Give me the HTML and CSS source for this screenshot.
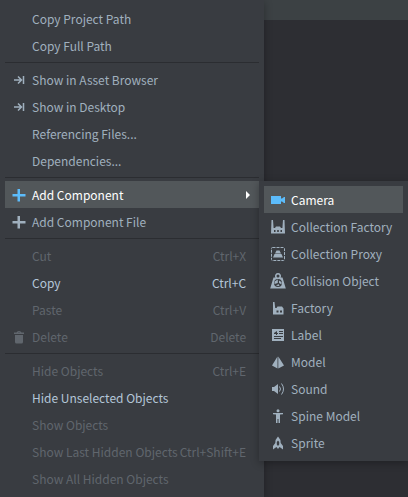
FILE: index.html
```html
<!DOCTYPE html>
<html lang="en">
<head>
<meta charset="utf-8">
<title>Context menu</title>
<link rel="stylesheet" href="styles.css">
</head>
<body>
<div class="toolbar"></div>
<ul class="menu" role="menu">
  <li><button class="item"><span class="label">Copy Project Path</span></button></li>
  <li><button class="item"><span class="label">Copy Full Path</span></button></li>
  <li class="separator" role="separator"></li>
  <li><button class="item"><svg class="icon" viewBox="0 0 16 16"><path class="line" d="M3 8h7M7 4.500l3.500 3.500L7 11.500M12.500 4v8"/></svg><span class="label">Show in Asset Browser</span></button></li>
  <li><button class="item"><svg class="icon" viewBox="0 0 16 16"><path class="line" d="M3 8h7M7 4.500l3.500 3.500L7 11.500M12.500 4v8"/></svg><span class="label">Show in Desktop</span></button></li>
  <li><button class="item"><span class="label">Referencing Files...</span></button></li>
  <li><button class="item"><span class="label">Dependencies...</span></button></li>
  <li class="separator" role="separator"></li>
  <li class="parent">
    <button class="item selected"><svg class="icon" viewBox="0 0 16 16"><path d="M6.500 2h2.500v5h5.500v2.500H9v5H6.500v-5H1.500V7h5z"/></svg><span class="label">Add Component</span><svg class="arrow" viewBox="0 0 4 8"><path d="M0 0l4 4-4 4z"/></svg></button>
    <ul class="menu submenu" role="menu">
      <li><button class="item selected"><svg class="icon" viewBox="0 0 16 16"><path d="M1 4h10v2.500h1L14 5h1v6h-1l-2-1.500h-1V12H1z"/></svg><span class="label">Camera</span></button></li>
      <li><button class="item"><svg class="icon" viewBox="0 0 16 16"><path fill-rule="evenodd" d="M1.500 1H3l.6 8H5l1-1.500h4L11 9h1.400l.6-8h1.500l.5 13.500H1zM4 11v2h1.500v-2zm3.200 0v2h1.600v-2zm3.300 0v2H12v-2z"/></svg><span class="label">Collection Factory</span></button></li>
      <li><button class="item"><svg class="icon" viewBox="0 0 16 16"><rect class="dash" x="1.500" y="1.500" width="13" height="13" rx="1"/><path d="M6.500 4.500h3l1.500 3H5zM4.500 8h7l1.500 3.500H3z"/></svg><span class="label">Collection Proxy</span></button></li>
      <li><button class="item"><svg class="icon" viewBox="0 0 16 16"><path fill-rule="evenodd" d="M8 0a3 3 0 0 1 2.600 4.500H12.500L15.800 15.500H.2L3.500 4.500h1.900A3 3 0 0 1 8 0zM8 1.500a1.500 1.500 0 1 0 0 3 1.500 1.500 0 0 0 0-3zM8 6a4 4 0 1 0 0 8 4 4 0 0 0 0-8z"/><path d="M7.800 6.500v3.500l-3.300 1V8.500zM9 7.500l2.500 1.500v2.500L9 10zM6 12.800L8.500 11l1 2z"/></svg><span class="label">Collision Object</span></button></li>
      <li><button class="item"><svg class="icon" viewBox="0 0 16 16"><path fill-rule="evenodd" d="M3 2h1.500l.7 6h1.300l1-1.500h4.500l1.500 2v6H3zM6.500 10.500v2h2v-2zm3.500 0v2h2v-2z"/></svg><span class="label">Factory</span></button></li>
      <li><button class="item"><svg class="icon" viewBox="0 0 16 16"><path fill-rule="evenodd" d="M2 2h12v12H2zM9 4v1h4V4zM9 6v1h4V6zM4 9v1h9V9zM4 11v1h7v-1zM7 4L4 6v1h2v1h1V7h1V6H7z"/></svg><span class="label">Label</span></button></li>
      <li><button class="item"><svg class="icon" viewBox="0 0 16 16"><path d="M7.500 2.500v12L2 11.500zM8.300 2.500v12L14 11.500z"/></svg><span class="label">Model</span></button></li>
      <li><button class="item"><svg class="icon" viewBox="0 0 16 16"><path d="M2 6h2l4-3v10l-4-3H2z"/><path class="thin" d="M9.500 5.500q2 2.500 0 5M11.500 2.500q4 5.500 0 11"/></svg><span class="label">Sound</span></button></li>
      <li><button class="item"><svg class="icon" viewBox="0 0 16 16"><circle cx="8" cy="2.700" r="1.500"/><path d="M3 5h10v1.200l-3 .3V15H8.500v-4h-1v4H6V6.500l-3-.3z"/></svg><span class="label">Spine Model</span></button></li>
      <li><button class="item"><svg class="icon" viewBox="0 0 16 16"><path fill-rule="evenodd" d="M8 1.500q3 3 2.700 6.500l2.300 3v3.500l-2-1.500-1.500-1L8 14l-1.500-2-1.500 1-2 1.500V11L5.300 8Q5 4.500 8 1.500zM8 5.500L6.800 7v2.500L8 11l1.200-1.500V7z"/></svg><span class="label">Sprite</span></button></li>
    </ul>
  </li>
  <li><button class="item"><svg class="icon" viewBox="0 0 16 16"><path d="M6.500 2h2.500v5h5.500v2.500H9v5H6.500v-5H1.500V7h5z"/></svg><span class="label">Add Component File</span></button></li>
  <li class="separator" role="separator"></li>
  <li><button class="item" disabled><span class="label">Cut</span><kbd>Ctrl+X</kbd></button></li>
  <li><button class="item command"><span class="label">Copy</span><kbd>Ctrl+C</kbd></button></li>
  <li><button class="item" disabled><span class="label">Paste</span><kbd>Ctrl+V</kbd></button></li>
  <li><button class="item" disabled><svg class="icon" viewBox="0 0 16 16"><path fill-rule="evenodd" d="M3 3.500h2.500Q6 2 8 2t2.500 1.500H13V5H3zM6.800 3.500h2.400Q8.700 3 8 3t-1.200.5zM4 6h8v7q0 1.500-1.500 1.500h-5Q4 14.500 4 13z"/></svg><span class="label">Delete</span><kbd>Delete</kbd></button></li>
  <li class="separator" role="separator"></li>
  <li><button class="item" disabled><span class="label">Hide Objects</span><kbd>Ctrl+E</kbd></button></li>
  <li><button class="item command"><span class="label">Hide Unselected Objects</span></button></li>
  <li><button class="item" disabled><span class="label">Show Objects</span></button></li>
  <li><button class="item" disabled><span class="label">Show Last Hidden Objects</span><kbd>Ctrl+Shift+E</kbd></button></li>
  <li><button class="item" disabled><span class="label">Show All Hidden Objects</span></button></li>
</ul>
</body>
</html>
```
FILE: styles.css
```css
* {
  box-sizing: border-box;
}

body {
  margin: 0;
  background: #2d2e33;
  font-family: "Noto Sans CJK SC", "Noto Sans", sans-serif;
  font-size: 12px;
}

.toolbar {
  height: 20px;
  margin-bottom: -20px;
  background: #3c4144;
}

.menu {
  position: relative;
  width: max-content;
  min-width: 264px;
  margin: 0;
  padding: 5px;
  list-style: none;
  background: #393c41;
  box-shadow: 0 2px 8px rgba(0, 0, 0, 0.3);
}

.parent {
  position: relative;
}

.submenu {
  position: absolute;
  top: 0;
  left: 100%;
  min-width: 149px;
}

.item {
  display: grid;
  grid-template-columns: 21px 1fr auto;
  align-items: center;
  width: 100%;
  height: 27px;
  padding: 0 13px 0 6px;
  border: 0;
  background: none;
  color: #a0b0be;
  font: inherit;
  line-height: 18px;
  text-align: left;
  white-space: nowrap;
}

.submenu .item {
  padding-right: 10px;
}

.label {
  grid-column: 2;
}

.item.command {
  color: #b4c6d8;
}

.item.selected {
  background: #52575a;
  color: #ffffff;
}

.item:disabled {
  color: #60666d;
}

kbd {
  margin-left: 2px;
  font: inherit;
}

.icon {
  width: 16px;
  height: 16px;
  fill: currentColor;
}

.selected .icon {
  fill: #5cbcfb;
}

.line,
.thin,
.dash {
  fill: none;
  stroke: currentColor;
}

.line {
  stroke-width: 1.5;
}

.dash {
  stroke-dasharray: 3 1;
}

.arrow {
  width: 4px;
  height: 8px;
  margin-right: -11px;
  fill: currentColor;
}

.separator {
  height: 7px;
  padding: 3px 0;
  background: #2b2d31 content-box;
}
```
